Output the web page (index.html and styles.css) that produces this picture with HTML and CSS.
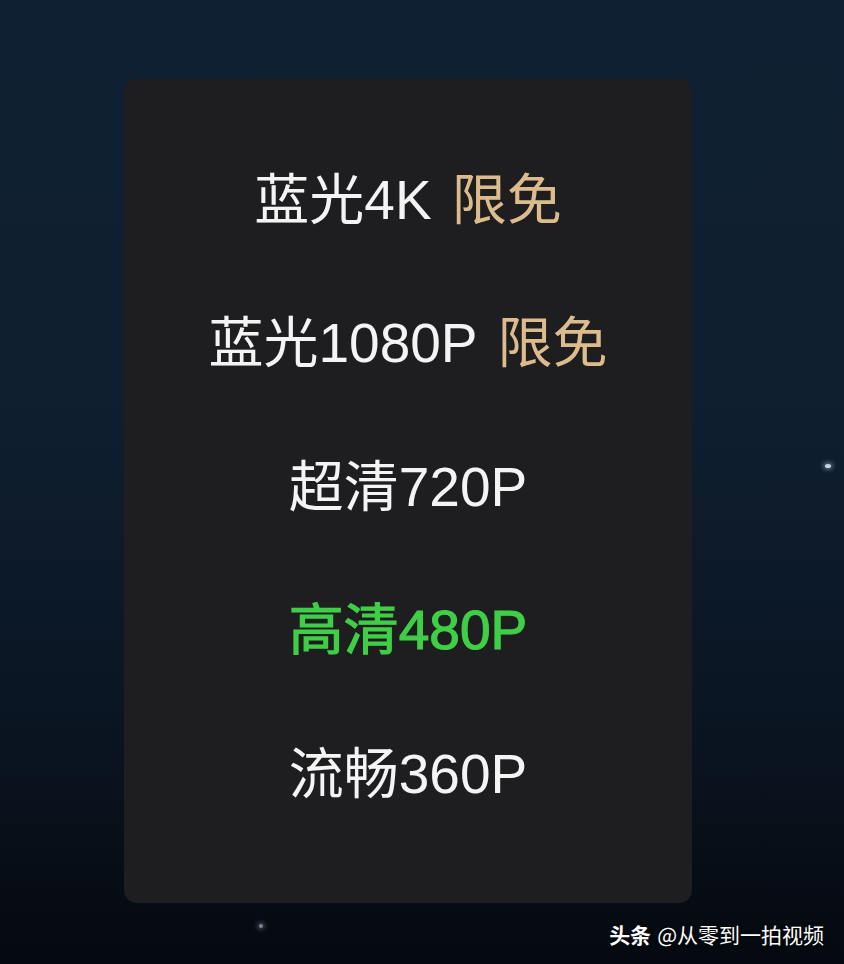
FILE: index.html
```html
<!DOCTYPE html>
<html lang="zh">
<head>
<meta charset="utf-8">
<link rel="stylesheet" href="styles.css">
</head>
<body>
<div class="screen">
  <div class="panel">
    <div class="row"><span class="label">蓝光4K</span><span class="free">限免</span></div>
    <div class="row"><span class="label">蓝光1080P</span><span class="free">限免</span></div>
    <div class="row"><span class="label">超清720P</span></div>
    <div class="row active"><span class="label">高清480P</span></div>
    <div class="row"><span class="label">流畅360P</span></div>
  </div>
  <div class="footer"><span class="brand">头条</span><span class="author">@从零到一拍视频</span></div>
  <span class="star star-a"></span>
  <span class="star star-b"></span>
</div>
</body>
</html>
```
FILE: styles.css
```css
html, body {
  margin: 0;
  padding: 0;
}
body {
  width: 844px;
  height: 964px;
  overflow: hidden;
  font-family: "Noto Sans CJK SC", "Noto Sans", sans-serif;
}
.screen {
  position: relative;
  width: 844px;
  height: 964px;
  box-sizing: border-box;
  padding-top: 79px;
  background: linear-gradient(180deg, #0f2032 0%, #0f1f30 40%, #0b1624 72%, #05090f 100%);
}
.panel {
  margin-left: 124px;
  width: 568px;
  height: 824px;
  box-sizing: border-box;
  padding-top: 44px;
  border-radius: 13px;
  background: #1e1e20;
  display: flex;
  flex-direction: column;
}
.row {
  height: 143.5px;
  display: flex;
  align-items: center;
  justify-content: center;
  gap: 20px;
  font-family: "Liberation Sans", "Noto Sans CJK SC", sans-serif;
  font-size: 55px;
  color: #f4f4f4;
}
.free {
  color: #dcbb8c;
}
.row.active {
  color: #3fcf47;
  -webkit-text-stroke: 1.2px #3fcf47;
}
.footer {
  display: flex;
  justify-content: flex-end;
  align-items: center;
  gap: 6px;
  padding-right: 20px;
  height: 61px;
  font-size: 21px;
  color: #ffffff;
  text-shadow: 0 0 3px rgba(0,0,0,0.8);
}
.brand {
  font-weight: 700;
}
.star {
  position: absolute;
  width: 6px;
  height: 4px;
  border-radius: 50%;
  background: #c8d6e4;
  box-shadow: 0 0 4px 2px rgba(180,200,220,0.45);
}
.star-a { left: 825px; top: 464px; }
.star-b { left: 259px; top: 924px; width: 4px; height: 4px; opacity: 0.6; }
```
